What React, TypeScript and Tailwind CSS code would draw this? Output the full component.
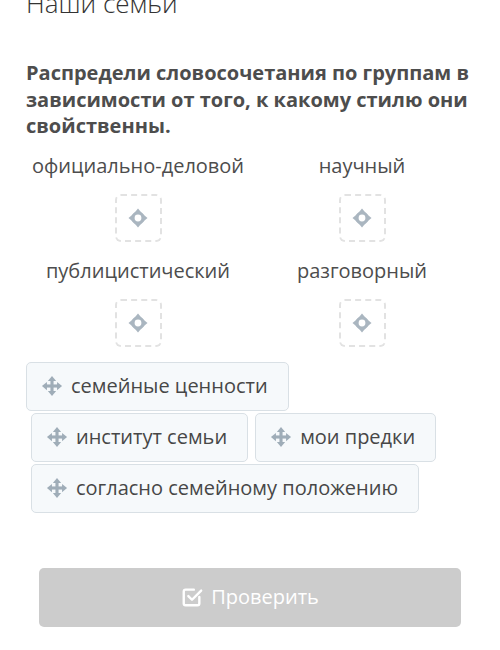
import React from 'react';

const font = { fontFamily: '"Open Sans", "Noto Sans", sans-serif' };

const MoveIcon = () => (
  <svg width="22" height="22" viewBox="0 0 24 24" className="shrink-0">
    <g fill="#9fadb8">
      <rect x="10.3" y="5" width="3.4" height="14" />
      <rect x="5" y="10.3" width="14" height="3.4" />
      <path d="M12 1 L16.5 6.5 L7.5 6.5 Z" />
      <path d="M12 23 L16.5 17.5 L7.5 17.5 Z" />
      <path d="M1 12 L6.5 7.5 L6.5 16.5 Z" />
      <path d="M23 12 L17.5 7.5 L17.5 16.5 Z" />
    </g>
  </svg>
);

const TargetIcon = () => (
  <svg width="20" height="20" viewBox="0 0 20 20">
    <circle cx="10" cy="10" r="5" fill="none" stroke="#aab6c0" strokeWidth="3.2" />
    <g fill="#aab6c0">
      <path d="M10 0.5 L14 5.2 L6 5.2 Z" />
      <path d="M10 19.5 L14 14.8 L6 14.8 Z" />
      <path d="M0.5 10 L5.2 6 L5.2 14 Z" />
      <path d="M19.5 10 L14.8 6 L14.8 14 Z" />
    </g>
  </svg>
);

const CheckSquare = () => (
  <svg width="22" height="22" viewBox="0 0 24 24" fill="none" stroke="white" strokeWidth="2.6" strokeLinecap="round" strokeLinejoin="round">
    <path d="M20 12v7a2 2 0 0 1-2 2H5a2 2 0 0 1-2-2V6a2 2 0 0 1 2-2h9" />
    <path d="M8 11l4 4L22 5" />
  </svg>
);

const Group = ({ label }: { label: string }) => (
  <div className="flex flex-col items-center">
    <div className="text-[20px] leading-[26px] text-[#4d4d4d]">{label}</div>
    <div className="mt-[15px] w-[47px] h-[48px] rounded-md border-2 border-dashed border-[#e2e2e2] flex items-center justify-center">
      <TargetIcon />
    </div>
  </div>
);

const Chip = ({ text, className = '' }: { text: string; className?: string }) => (
  <div className={`h-[49px] flex items-center gap-[8px] pl-[14px] pr-[20px] rounded-[5px] border border-[#d9e0e5] bg-[#f6f9fb] ${className}`}>
    <MoveIcon />
    <span className="text-[20px] text-[#474747] whitespace-nowrap">{text}</span>
  </div>
);

export default function App() {
  return (
    <div className="w-[500px] h-[650px] overflow-hidden bg-white" style={font}>
      <div className="px-[26px]">
        <h1 className="-mt-[12px] text-[26px] leading-[31px] font-light text-[#333]">Наши семьи</h1>
        <p className="mt-[41px] text-[20px] leading-[26.5px] font-bold text-[#4d4d4d]">
          Распредели словосочетания по группам в зависимости от того, к какому стилю они свойственны.
        </p>
        <div className="mt-[13px] grid grid-cols-2 gap-y-[16px]">
          <Group label="официально-деловой" />
          <Group label="научный" />
          <Group label="публицистический" />
          <Group label="разговорный" />
        </div>
        <div className="mt-[15px] flex flex-wrap gap-x-[7px] gap-y-px pl-[5px] w-[440px]">
          <Chip text="семейные ценности" className="-ml-[5px]" />
          <div className="w-full h-0" />
          <Chip text="институт семьи" />
          <Chip text="мои предки" />
          <div className="w-full h-0" />
          <Chip text="согласно семейному положению" />
        </div>
      </div>
      <div className="mt-[55px] px-[39px]">
        <button className="w-full h-[59px] rounded-[5px] bg-[#cccccc] flex items-center justify-center gap-[8px] text-white text-[20px]">
          <CheckSquare />
          <span>Проверить</span>
        </button>
      </div>
    </div>
  );
}
